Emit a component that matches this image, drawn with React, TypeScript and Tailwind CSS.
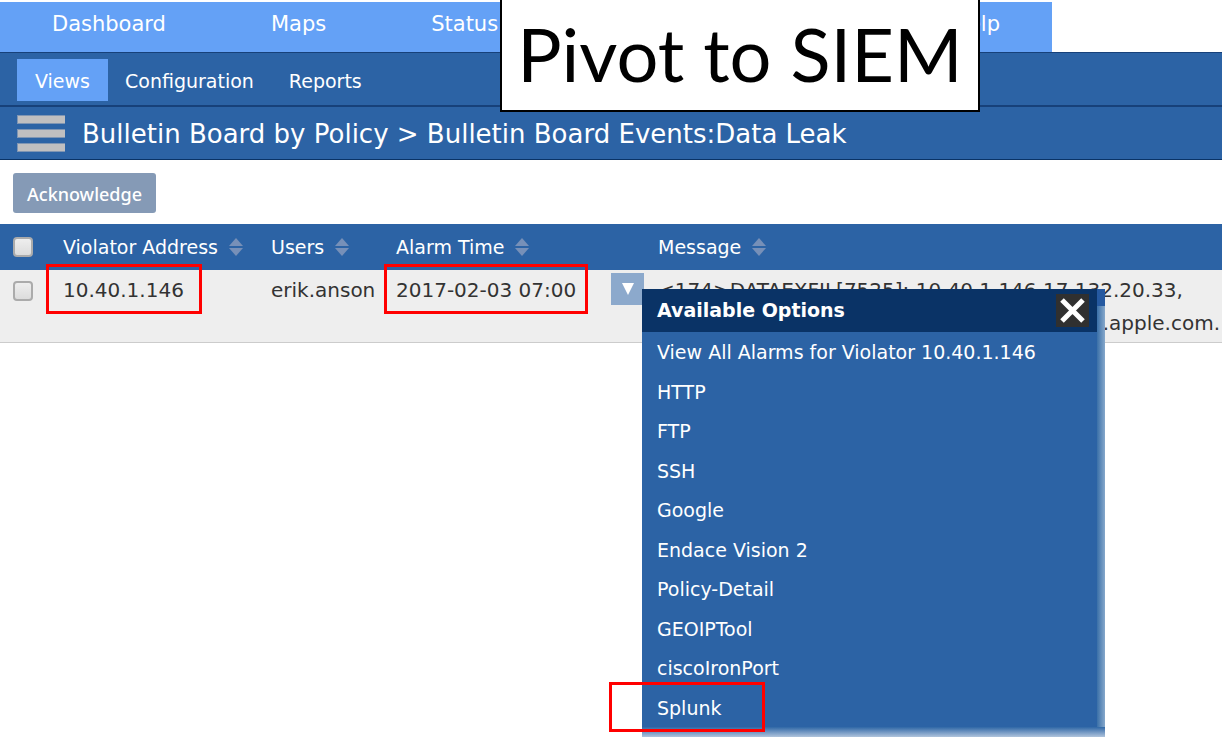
import { useState } from 'react'

const OPTIONS = [
  'View All Alarms for Violator 10.40.1.146',
  'HTTP',
  'FTP',
  'SSH',
  'Google',
  'Endace Vision 2',
  'Policy-Detail',
  'GEOIPTool',
  'ciscoIronPort',
  'Splunk',
]

const COLUMNS = ['Violator Address', 'Users', 'Alarm Time']

function SortIcon() {
  return (
    <svg className="w-4 h-5 shrink-0" viewBox="0 0 16 20" fill="#7790b8" aria-hidden="true">
      <path d="M8 1L15 9H1z" />
      <path d="M1 11H15L8 19z" />
    </svg>
  )
}

function SortButton({ label }: { label: string }) {
  return (
    <button type="button" className="flex items-center gap-[10px] whitespace-nowrap">
      {label}
      <SortIcon />
    </button>
  )
}

function RowCheckbox({ label }: { label: string }) {
  return (
    <input
      type="checkbox"
      aria-label={label}
      className="block appearance-none size-5 rounded-[4px] border-2 border-[#ababab] bg-linear-to-b from-[#eeeeee] to-[#dcdcdc] checked:bg-[#64a1f6]"
    />
  )
}

function OptionsMenu({ onClose }: { onClose: () => void }) {
  return (
    <div className="absolute left-[31px] top-4 z-10 w-[463px] text-[19px] text-white">
      <div className="flex">
        <div className="flex-1 bg-[#2c63a5]">
          <div className="flex items-center justify-between h-[43px] pl-[15px] pr-2 bg-[#0a3366]">
            <h2 className="font-bold">Available Options</h2>
            <button
              type="button"
              aria-label="Close"
              onClick={onClose}
              className="size-[33px] bg-[#303030]"
            >
              <svg className="size-[33px]" viewBox="0 0 33 33" stroke="#fff" strokeWidth="5" aria-hidden="true">
                <path d="M6 6L27 27M27 6L6 27" />
              </svg>
            </button>
          </div>
          <ul className="grid auto-rows-fr h-[395px]">
            {OPTIONS.map(option => (
              <li key={option} className="flex items-center pl-[15px] pt-[2px]">
                <a href="#" className="relative whitespace-nowrap">
                  {option}
                  {option === 'Splunk' && (
                    <span className="absolute -left-12 -top-[10px] w-[156px] h-[50px] border-3 border-[#ff0000]" />
                  )}
                </a>
              </li>
            ))}
          </ul>
        </div>
        {/* Soft edge on the right */}
        <div className="flex flex-col w-2">
          <div className="h-[17px] bg-[#2559a0]" />
          <div className="flex-1 bg-linear-to-r from-[#3a70a8] to-[#86a8cb]" />
        </div>
      </div>
      <div className="h-[10px] bg-linear-to-b from-[#2f68a6] to-[#b0c4dc]" />
    </div>
  )
}

export default function App() {
  const [menuOpen, setMenuOpen] = useState(true)

  return (
    <div className="relative min-h-screen overflow-hidden bg-white pt-[2px] font-['DejaVu_Sans',sans-serif] text-[19px] leading-[33px]">
      <nav className="flex items-center h-[50px] max-w-[1052px] px-[52px] pb-[6px] bg-[#64a1f6] text-white text-[21px]">
        <div className="flex gap-[105px]">
          <a href="#">Dashboard</a>
          <a href="#">Maps</a>
          <a href="#">Status</a>
        </div>
        <a href="#" className="ml-auto">Help</a>
      </nav>

      <nav className="flex items-center h-[55px] pl-[17px] pt-[2px] bg-[#2c63a5] border-t border-b-2 border-[#17417a] text-white">
        <a href="#" className="flex items-center h-[42px] px-[18px] pt-[2px] bg-[#64a1f6]">Views</a>
        <a href="#" className="pl-[17px] pr-[18px] pt-[2px]">Configuration</a>
        <a href="#" className="px-[17px] pt-[2px]">Reports</a>
      </nav>

      <header className="flex items-center h-[53px] pl-[17px] gap-[17px] bg-[#2c63a5] border-b border-[#0a3366] text-white">
        <button type="button" aria-label="Menu">
          <svg className="w-12 h-[37px]" viewBox="0 0 48 37" aria-hidden="true">
            <g fill="#7f95b3">
              <rect width="48" height="9" />
              <rect y="14" width="48" height="9" />
              <rect y="28" width="48" height="9" />
            </g>
            <g fill="#c0bfc0">
              <rect x="1" y="1" width="47" height="7" />
              <rect x="1" y="15" width="47" height="7" />
              <rect x="1" y="29" width="47" height="7" />
            </g>
          </svg>
        </button>
        <h1 className="pt-[2px] text-[26px] whitespace-nowrap">
          Bulletin Board by Policy &gt; Bulletin Board Events:Data Leak
        </h1>
      </header>

      <div className="px-[13px] pt-[13px] pb-[11px]">
        <button
          type="button"
          className="block h-10 px-[14px] pt-[2px] rounded-[3px] bg-[#859ab6] text-white font-['Noto_Sans',sans-serif] text-[18px] font-medium"
        >
          Acknowledge
        </button>
      </div>

      <table className="w-full table-fixed text-left">
        <colgroup>
          <col className="w-[63px]" />
          <col className="w-[208px]" />
          <col className="w-[125px]" />
          <col className="w-[215px]" />
          <col className="w-[47px]" />
          <col />
        </colgroup>
        <thead>
          <tr className="h-[46px] bg-[#2c63a5] text-white">
            <th className="pl-[13px]">
              <RowCheckbox label="Select all" />
            </th>
            {COLUMNS.map(label => (
              <th key={label} className="font-normal">
                <SortButton label={label} />
              </th>
            ))}
            <th />
            <th className="font-normal">
              <SortButton label="Message" />
            </th>
          </tr>
        </thead>
        <tbody>
          <tr className="h-[72px] align-top bg-[#eeeeee] border-b border-[#cccccc] text-[20px] text-[#333333]">
            <td className="pl-[13px] pt-[11px]">
              <RowCheckbox label="Select 10.40.1.146" />
            </td>
            <td className="pt-1">
              <span className="relative">
                10.40.1.146
                <span className="absolute -left-[17px] -top-[14px] w-[156px] h-[50px] border-3 border-[#ff0000]" />
              </span>
            </td>
            <td className="pt-1">erik.anson</td>
            <td className="pt-1">
              <span className="relative whitespace-nowrap">
                2017-02-03 07:00
                <span className="absolute -left-3 -top-[14px] w-[204px] h-[50px] border-3 border-[#ff0000]" />
              </span>
            </td>
            <td className="pt-[3px]">
              <div className="relative">
                <button
                  type="button"
                  aria-label="Available options"
                  onClick={() => setMenuOpen(v => !v)}
                  className="flex items-center justify-center w-[33px] h-8 bg-[#8ca9cc]"
                >
                  <svg className="w-3 h-3" viewBox="0 0 12 12" fill="#fff" aria-hidden="true">
                    <path d="M0 0H12L6 12z" />
                  </svg>
                </button>
                {menuOpen && <OptionsMenu onClose={() => setMenuOpen(false)} />}
              </div>
            </td>
            <td className="pt-1 pr-[2px] whitespace-nowrap">
              <div>&lt;174&gt;DATAEXFIL[7525]: 10.40.1.146,17.132.20.33,</div>
              <div className="text-right">.apple.com.</div>
            </td>
          </tr>
        </tbody>
      </table>

      {/* Slide caption laid over the header bars */}
      <div className="absolute left-[500px] top-0 w-[480px] h-[112px] border-2 border-t-0 border-black bg-white text-center text-black font-['Lato',sans-serif] text-[74px] leading-[108px] whitespace-nowrap">
        Pivot to SIEM
      </div>
    </div>
  )
}
